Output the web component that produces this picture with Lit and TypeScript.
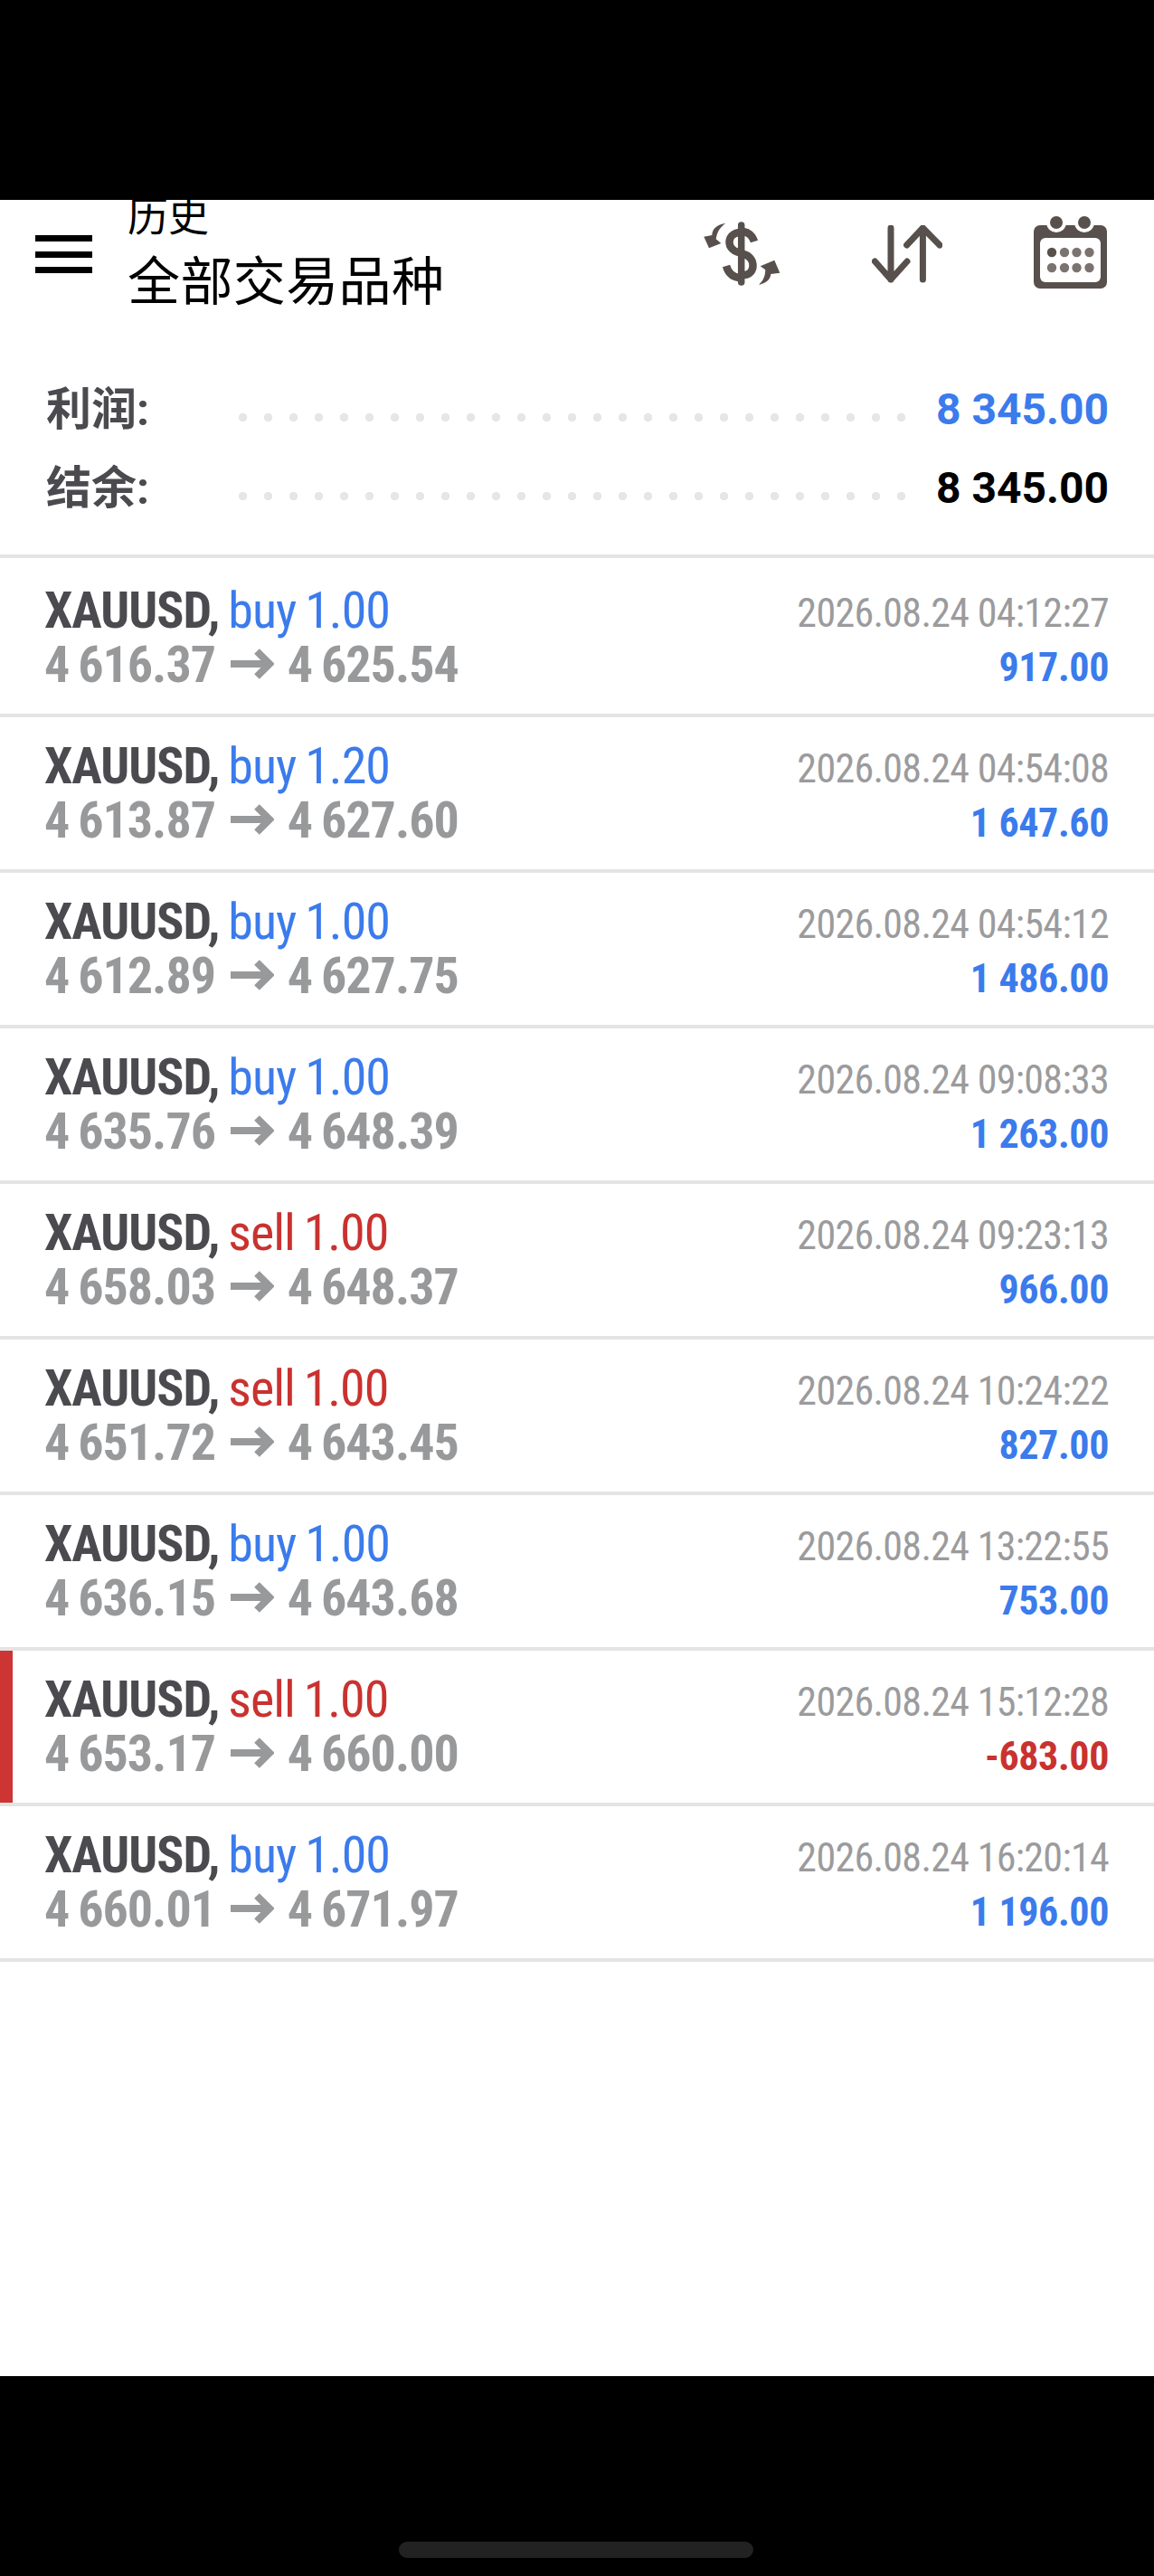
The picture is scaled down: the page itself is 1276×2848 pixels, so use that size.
import { LitElement, html, css, svg } from 'lit';
import { customElement } from 'lit/decorators.js';
import { classMap } from 'lit/directives/class-map.js';

interface Deal {
    side: 'buy' | 'sell';
    volume: string;
    open: string;
    close: string;
    time: string;
    profit: string;
    flagged?: boolean;
}

const DEALS: Deal[] = [
    { side: 'buy', volume: '1.00', open: '4 616.37', close: '4 625.54', time: '2026.08.24 04:12:27', profit: '917.00' },
    { side: 'buy', volume: '1.20', open: '4 613.87', close: '4 627.60', time: '2026.08.24 04:54:08', profit: '1 647.60' },
    { side: 'buy', volume: '1.00', open: '4 612.89', close: '4 627.75', time: '2026.08.24 04:54:12', profit: '1 486.00' },
    { side: 'buy', volume: '1.00', open: '4 635.76', close: '4 648.39', time: '2026.08.24 09:08:33', profit: '1 263.00' },
    { side: 'sell', volume: '1.00', open: '4 658.03', close: '4 648.37', time: '2026.08.24 09:23:13', profit: '966.00' },
    { side: 'sell', volume: '1.00', open: '4 651.72', close: '4 643.45', time: '2026.08.24 10:24:22', profit: '827.00' },
    { side: 'buy', volume: '1.00', open: '4 636.15', close: '4 643.68', time: '2026.08.24 13:22:55', profit: '753.00' },
    { side: 'sell', volume: '1.00', open: '4 653.17', close: '4 660.00', time: '2026.08.24 15:12:28', profit: '-683.00', flagged: true },
    { side: 'buy', volume: '1.00', open: '4 660.01', close: '4 671.97', time: '2026.08.24 16:20:14', profit: '1 196.00' },
];

const menuIcon = svg`<svg class="menu" width="63" height="42" viewBox="0 0 63 42"><path d="M0 0h63v7H0zM0 18h63v7H0zM0 35h63v7H0z" fill="#000"/></svg>`;

const dollarIcon = svg`<svg width="100" height="90" viewBox="0 0 100 90" fill="#58504c">
    <g fill="none" stroke="#58504c">
        <path d="M50.7 14V77" stroke-width="7.5" stroke-linecap="round"/>
        <g stroke-width="8.5">
            <path d="M48 22C34 24 34 41 48 44"/>
            <path d="M53 21C59 22 63 26 65 32"/>
            <path d="M53 46C67 49 67 69 53 69"/>
            <path d="M34 59C36 66 41 71 48 72"/>
        </g>
    </g>
    <path d="M33.3 11.7C22 14 18.5 19 18.3 25L9.3 26.7L15 39.3L28.3 34L22.7 29.3C24 20 28 16 33.3 11.7Z"/>
    <path d="M70 80C81 77 83 72 83.3 68L93.3 66.7L87.3 52.7L71.7 59.3L77.3 63.3C77 71 75 75 70 80Z"/>
</svg>`;

const sortIcon = svg`<svg width="78" height="64" viewBox="0 0 78 64" fill="none" stroke="#58504c" stroke-width="7" stroke-linecap="round" stroke-linejoin="round">
    <path d="M21 3V60M3.4 40L21 60L39 40"/>
    <path d="M56.4 60V3M38.6 22L56.4 3L75 22"/>
</svg>`;

const calendarIcon = svg`<svg width="81" height="81" viewBox="0 0 81 81">
    <rect y="11" width="81" height="70" rx="7" fill="#58504c"/>
    <circle cx="25" cy="8" r="11" fill="#fff"/>
    <circle cx="56" cy="8" r="11" fill="#fff"/>
    <circle cx="25" cy="8" r="7" fill="#58504c"/>
    <circle cx="56" cy="8" r="7" fill="#58504c"/>
    <rect x="7" y="25" width="67" height="49" rx="6" fill="#fff"/>
    <circle cx="20" cy="41" r="5.2" fill="#58504c"/>
    ${[34, 47.5, 61.5].map((x) => svg`<circle cx=${x} cy="41" r="5.2" fill="#7a7370"/>`)}
    ${[20, 34, 47.5, 61.5].map((x) => svg`<circle cx=${x} cy="58" r="5.2" fill="#7a7370"/>`)}
</svg>`;

const priceArrow = svg`<svg class="arrow" width="48" height="34" viewBox="0 0 48 34" fill="none" stroke="#98999b" stroke-width="8" role="img" aria-label="→">
    <path d="M0 17H42M29 3L43 17L29 31"/>
</svg>`;

@customElement('app-root')
export class AppRoot extends LitElement {
    static styles = css`
        :host {
            display: block;
            width: 1276px;
            height: 2848px;
            background: #fff;
            font-family: Roboto, 'Noto Sans CJK SC', sans-serif;
            overflow: hidden;
        }

        .page {
            display: flex;
            flex-direction: column;
            height: 100%;
        }

        .status {
            height: 221px;
            flex: none;
            background: #000;
        }

        .toolbar {
            height: 197px;
            flex: none;
            display: flex;
            align-items: flex-start;
            padding: 0 52px 0 39px;
            overflow: hidden;
        }

        .menu {
            flex: none;
            margin-top: 39px;
        }

        .titles {
            margin-left: 39px;
            margin-top: -13px;
            flex: 1;
            font-family: 'Noto Sans CJK SC', sans-serif;
            color: #000;
        }

        .titles .sub {
            font-size: 45px;
            line-height: 57px;
        }

        .titles .main {
            font-size: 58px;
            line-height: 84px;
            letter-spacing: 0.4px;
        }

        .actions {
            display: flex;
            align-items: flex-start;
        }

        .actions span {
            display: flex;
        }

        .actions .dollar {
            margin-top: 14px;
            margin-left: -1px;
            margin-right: 95px;
        }

        .actions .sort {
            margin-top: 28px;
            margin-right: 101px;
        }

        .actions .calendar {
            margin-top: 17px;
        }

        .summary {
            flex: none;
            padding: 0 50px 21px 51px;
            border-bottom: 4px solid #e4e4e4;
        }

        .summary-row {
            display: flex;
            align-items: center;
            height: 87px;
        }

        .summary-label {
            width: 213px;
            flex: none;
            padding-bottom: 28px;
            font-size: 50px;
            font-weight: 700;
            color: #4a4a4f;
        }

        .leader {
            width: 737px;
            flex: none;
            height: 9px;
            background: radial-gradient(circle at 4.5px 4.5px, #e6e6e6 4.4px, transparent 4.9px) 0 0 / 28px 9px repeat-x;
        }

        .summary-value {
            margin-left: auto;
            padding-bottom: 18px;
            font-size: 48px;
            font-weight: 700;
            color: #000;
            white-space: nowrap;
        }

        .summary-value.profit {
            color: #3b7bec;
        }

        .deals {
            padding-top: 4px;
        }

        .deal {
            position: relative;
            display: flex;
            justify-content: space-between;
            box-sizing: border-box;
            height: 172px;
            border-bottom: 4px solid #e4e4e4;
            padding: 0 50px 0 49px;
            font-stretch: 75%;
            white-space: nowrap;
        }

        .deal.flagged::before {
            content: '';
            position: absolute;
            left: 0;
            top: 0;
            bottom: 0;
            width: 14px;
            background: #cc3533;
        }

        .left {
            padding-top: 24px;
            font-size: 56px;
            line-height: 60px;
            letter-spacing: -1px;
            word-spacing: -2px;
        }

        .left > div {
            height: 60px;
        }

        .symbol {
            font-weight: 700;
            color: #4a4a4f;
        }

        .buy {
            color: #3b7bec;
        }

        .sell {
            color: #c9322f;
        }

        .prices {
            font-weight: 700;
            color: #98999b;
        }

        .arrow {
            margin: 0 5px 0 7px;
            vertical-align: 3px;
        }

        .right {
            padding-top: 27px;
            text-align: right;
            font-size: 44px;
            line-height: 60px;
        }

        .time {
            color: #9b9b9d;
            letter-spacing: -0.7px;
        }

        .amount {
            font-weight: 700;
            color: #3b7bec;
            letter-spacing: -0.4px;
        }

        .amount.loss {
            color: #c9322f;
        }

        .spacer {
            flex: 1;
        }

        .nav {
            flex: none;
            height: 221px;
            background: #000;
            display: flex;
            justify-content: center;
            align-items: flex-end;
            padding-bottom: 20px;
            box-sizing: border-box;
        }

        .handle {
            width: 392px;
            height: 18px;
            margin-left: -2px;
            border-radius: 9px;
            background: #222;
        }
    `;

    private renderDeal(d: Deal) {
        return html`
            <div class=${classMap({ deal: true, flagged: !!d.flagged })}>
                <div class="left">
                    <div><span class="symbol">XAUUSD,</span> <span class=${d.side}>${d.side} ${d.volume}</span></div>
                    <div class="prices">${d.open} ${priceArrow} ${d.close}</div>
                </div>
                <div class="right">
                    <div class="time">${d.time}</div>
                    <div class=${classMap({ amount: true, loss: d.profit.startsWith('-') })}>${d.profit}</div>
                </div>
            </div>
        `;
    }

    render() {
        return html`
            <div class="page">
                <div class="status"></div>
                <div class="toolbar">
                    ${menuIcon}
                    <div class="titles">
                        <div class="sub">历史</div>
                        <div class="main">全部交易品种</div>
                    </div>
                    <div class="actions">
                        <span class="dollar">${dollarIcon}</span>
                        <span class="sort">${sortIcon}</span>
                        <span class="calendar">${calendarIcon}</span>
                    </div>
                </div>
                <div class="summary">
                    <div class="summary-row">
                        <div class="summary-label">利润:</div>
                        <div class="leader"></div>
                        <div class="summary-value profit">8 345.00</div>
                    </div>
                    <div class="summary-row">
                        <div class="summary-label">结余:</div>
                        <div class="leader"></div>
                        <div class="summary-value">8 345.00</div>
                    </div>
                </div>
                <div class="deals">${DEALS.map((d) => this.renderDeal(d))}</div>
                <div class="spacer"></div>
                <div class="nav"><div class="handle"></div></div>
            </div>
        `;
    }
}
